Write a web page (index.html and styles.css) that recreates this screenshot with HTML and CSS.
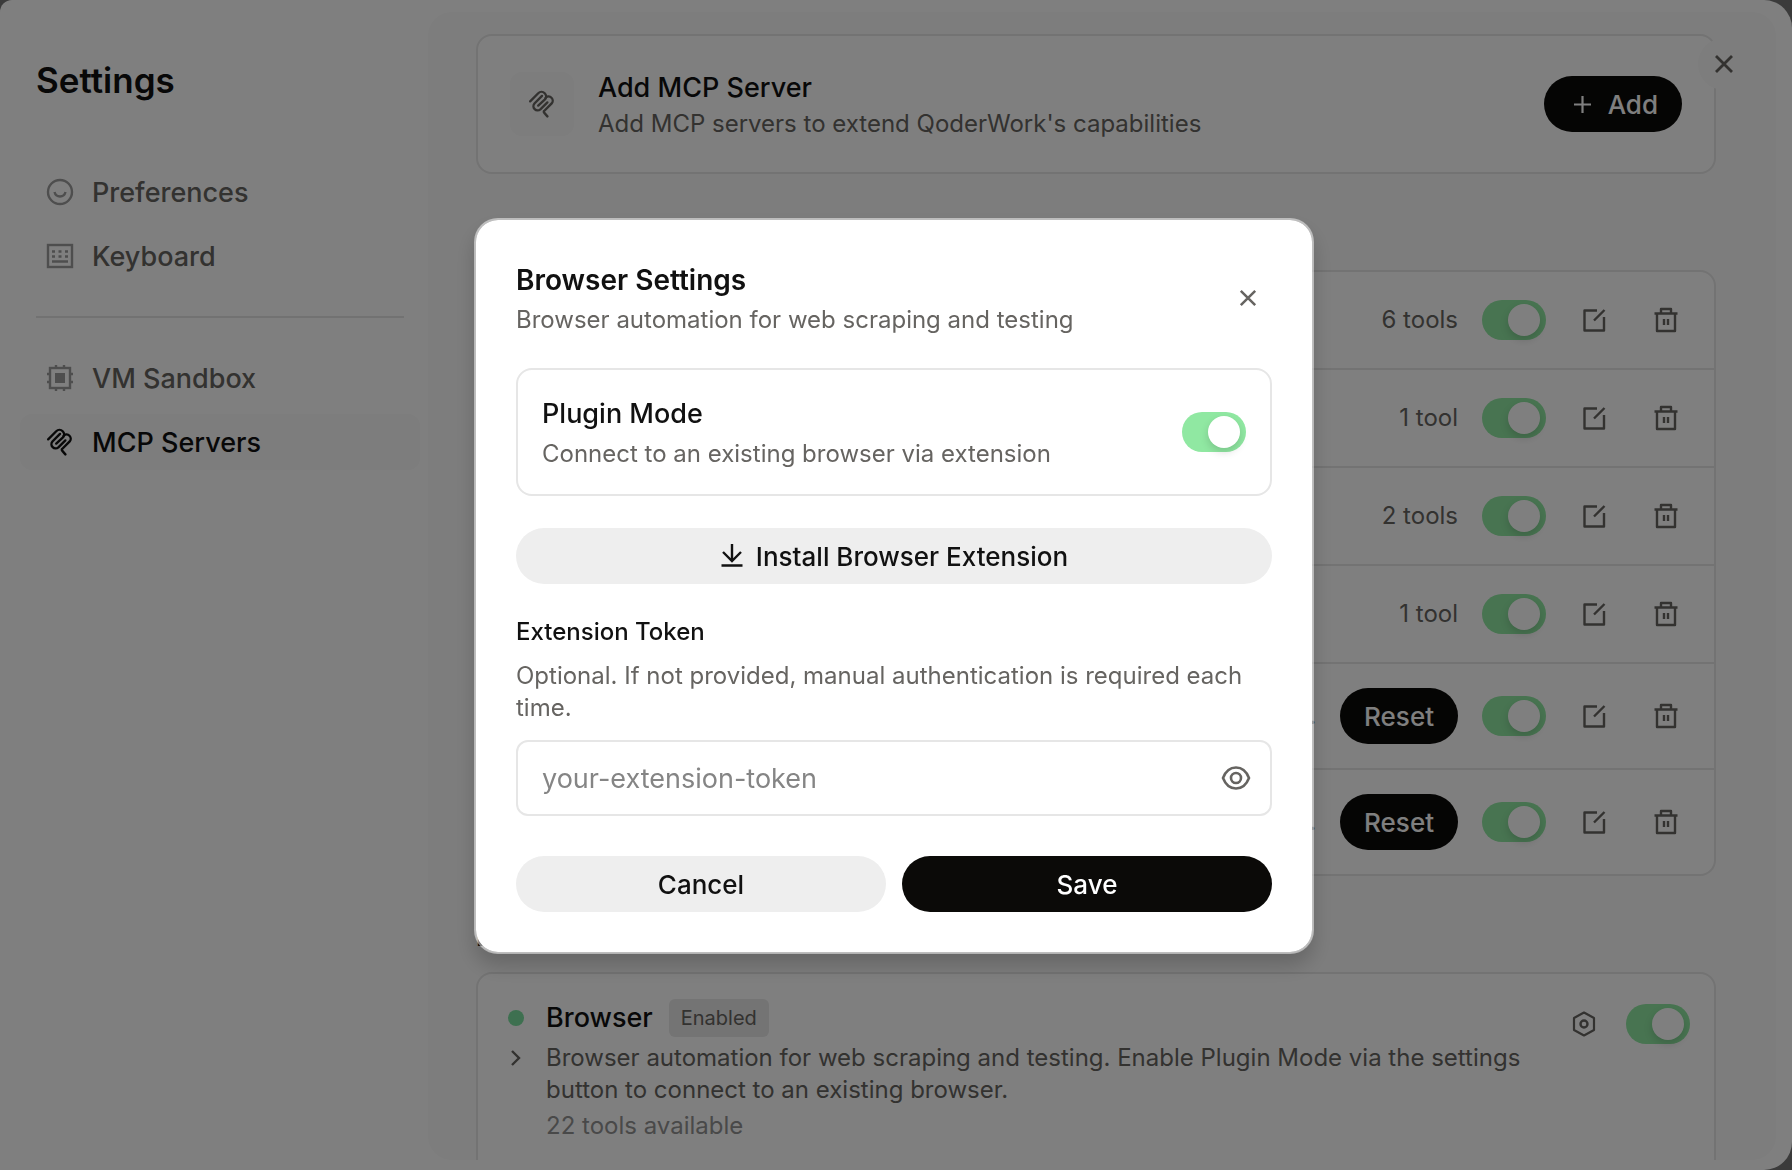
FILE: index.html
```html
<!DOCTYPE html>
<html lang="en">

<head>
    <meta charset="utf-8">
    <meta name="viewport" content="width=device-width, initial-scale=1" />
    <title>Settings</title>
    <link rel="stylesheet" href="styles.css">
</head>

<body>
    <!-- shared icons -->
    <svg class="sprite" aria-hidden="true">
        <symbol id="i-mcp" viewBox="0 0 26 26">
            <g fill="none" stroke="currentColor" stroke-width="2.200" stroke-linecap="round">
                <path d="M2 10.500L9.500 3a4.100 4.100 0 0 1 6 6L9.500 14.500" />
                <path d="M13 5.500L6 12.500a3.900 3.900 0 0 0 5.500 5.500L18 11.500" />
                <path d="M16.500 7a3.900 3.900 0 0 1 5.500 5.500L15 19.500a1 1 0 0 0 0 1.500L18 24.500" />
            </g>
        </symbol>
        <symbol id="i-close" viewBox="0 0 20 20">
            <path d="M2 2l16 16M18 2L2 18" fill="none" stroke="currentColor" stroke-width="2.8" />
        </symbol>
        <symbol id="i-edit" viewBox="0 0 24 24">
            <path d="M15 2.500H2.500V22.500H22V9M12 12.500L22.500 2" fill="none" stroke="currentColor" stroke-width="2.400" stroke-linejoin="round" />
        </symbol>
        <symbol id="i-trash" viewBox="0 0 24 26">
            <path d="M.5 6.500H23.500M7 6V2H17V6M3 6.500V24H21V6.500M10 12V18M14 12V18" fill="none" stroke="currentColor" stroke-width="2.400" stroke-linejoin="round" />
        </symbol>
    </svg>

    <div class="app">
        <aside class="sidebar">
            <h1>Settings</h1>
            <nav>
                <a class="nav-item" href="#preferences">
                    <svg width="28" height="28" viewBox="0 0 28 28" fill="none" stroke="currentColor" stroke-width="2.400">
                        <circle cx="14" cy="14" r="12" />
                        <path d="M8.500 14c1.500 6 9.500 6 11 0" />
                    </svg>
                    Preferences
                </a>
                <a class="nav-item" href="#keyboard">
                    <svg width="28" height="28" viewBox="0 0 28 28" fill="none" stroke="currentColor" stroke-width="2.400">
                        <rect x="2" y="3" width="24" height="22" />
                        <path d="M6 9.500h3M12.500 9.500h3M19 9.500h3M6 14.500h3M12.500 14.500h3M19 14.500h3M6 19.500h16" stroke-width="2.500" />
                    </svg>
                    Keyboard
                </a>
                <hr>
                <a class="nav-item" href="#sandbox">
                    <svg width="28" height="28" viewBox="0 0 28 28" fill="none" stroke="currentColor" stroke-width="2.400">
                        <rect x="4" y="4" width="20" height="20" />
                        <path d="M10 1v3M18 1v3M10 24v3M18 24v3M1 10h3M1 18h3M24 10h3M24 18h3" />
                        <rect x="9" y="9" width="10" height="10" fill="currentColor" stroke="none" />
                    </svg>
                    VM Sandbox
                </a>
                <a class="nav-item active" href="#mcp">
                    <svg width="28" height="28"><use href="#i-mcp" /></svg>
                    MCP Servers
                </a>
            </nav>
        </aside>

        <main class="panel">
            <section class="card add-card">
                <div class="tile"><svg width="28" height="28"><use href="#i-mcp" /></svg></div>
                <div class="grow">
                    <h3>Add MCP Server</h3>
                    <p class="text">Add MCP servers to extend QoderWork's capabilities</p>
                </div>
                <button class="btn dark" type="button">
                    <svg width="28" height="28" viewBox="0 0 28 28"><path d="M14.500 6v17M6 14.500h17" stroke="currentColor" stroke-width="2.200" /></svg>
                    Add
                </button>
            </section>

            <section class="card servers">
                <div class="server">
                    <span class="text">6 tools</span>
                    <input class="toggle" type="checkbox" aria-label="Enable server" checked>
                    <button class="icon-btn" type="button" aria-label="Edit"><svg width="24" height="24"><use href="#i-edit" /></svg></button>
                    <button class="icon-btn" type="button" aria-label="Delete"><svg width="24" height="26"><use href="#i-trash" /></svg></button>
                </div>
                <div class="server">
                    <span class="text">1 tool</span>
                    <input class="toggle" type="checkbox" aria-label="Enable server" checked>
                    <button class="icon-btn" type="button" aria-label="Edit"><svg width="24" height="24"><use href="#i-edit" /></svg></button>
                    <button class="icon-btn" type="button" aria-label="Delete"><svg width="24" height="26"><use href="#i-trash" /></svg></button>
                </div>
                <div class="server">
                    <span class="text">2 tools</span>
                    <input class="toggle" type="checkbox" aria-label="Enable server" checked>
                    <button class="icon-btn" type="button" aria-label="Edit"><svg width="24" height="24"><use href="#i-edit" /></svg></button>
                    <button class="icon-btn" type="button" aria-label="Delete"><svg width="24" height="26"><use href="#i-trash" /></svg></button>
                </div>
                <div class="server">
                    <span class="text">1 tool</span>
                    <input class="toggle" type="checkbox" aria-label="Enable server" checked>
                    <button class="icon-btn" type="button" aria-label="Edit"><svg width="24" height="24"><use href="#i-edit" /></svg></button>
                    <button class="icon-btn" type="button" aria-label="Delete"><svg width="24" height="26"><use href="#i-trash" /></svg></button>
                </div>
                <div class="server">
                    <span class="text">...</span>
                    <button class="btn dark" type="button">Reset</button>
                    <input class="toggle" type="checkbox" aria-label="Enable server" checked>
                    <button class="icon-btn" type="button" aria-label="Edit"><svg width="24" height="24"><use href="#i-edit" /></svg></button>
                    <button class="icon-btn" type="button" aria-label="Delete"><svg width="24" height="26"><use href="#i-trash" /></svg></button>
                </div>
                <div class="server">
                    <span class="text">...</span>
                    <button class="btn dark" type="button">Reset</button>
                    <input class="toggle" type="checkbox" aria-label="Enable server" checked>
                    <button class="icon-btn" type="button" aria-label="Edit"><svg width="24" height="24"><use href="#i-edit" /></svg></button>
                    <button class="icon-btn" type="button" aria-label="Delete"><svg width="24" height="26"><use href="#i-trash" /></svg></button>
                </div>
            </section>

            <h2 class="section-title">Built-in</h2>
            <section class="card builtin">
                <div class="marks">
                    <i class="dot"></i>
                    <button class="expand" type="button" aria-label="Expand">
                        <svg width="12" height="16" viewBox="0 0 12 16"><path d="M2 1l7 7-7 7" fill="none" stroke="currentColor" stroke-width="2.400" /></svg>
                    </button>
                </div>
                <div class="grow">
                    <div class="name"><h3>Browser</h3><span class="badge">Enabled</span></div>
                    <p class="text">Browser automation for web scraping and testing. Enable Plugin Mode via the settings button to connect to an existing browser.</p>
                    <p class="text light">22 tools available</p>
                </div>
                <div class="actions">
                    <button class="icon-btn" type="button" aria-label="Browser settings">
                        <svg width="24" height="26" viewBox="0 0 24 26" fill="none" stroke="currentColor" stroke-width="2.200">
                            <path d="M12 1.500l10 5.500v12l-10 5.500L2 19V7z" stroke-linejoin="round" />
                            <circle cx="12" cy="13" r="3.500" stroke-width="2.400" />
                        </svg>
                    </button>
                    <input class="toggle" type="checkbox" aria-label="Enable Browser" checked>
                </div>
            </section>
        </main>

        <button class="close-settings" type="button" aria-label="Close settings"><svg width="20" height="20"><use href="#i-close" /></svg></button>
    </div>

    <div class="overlay">
        <form class="modal" role="dialog" aria-labelledby="modal-title">
            <header>
                <div class="grow">
                    <h2 id="modal-title">Browser Settings</h2>
                    <p class="text">Browser automation for web scraping and testing</p>
                </div>
                <button class="icon-btn" type="button" aria-label="Close"><svg width="18" height="18"><use href="#i-close" /></svg></button>
            </header>
            <div class="option">
                <div class="grow">
                    <label class="option-title" for="plugin">Plugin Mode</label>
                    <p class="text">Connect to an existing browser via extension</p>
                </div>
                <input class="toggle" type="checkbox" id="plugin" checked>
            </div>
            <button class="btn install" type="button">
                <svg width="24" height="28" viewBox="0 0 24 28" fill="none" stroke="currentColor" stroke-width="2.400">
                    <path d="M12 2v17M3 10l9 9 9-9M1.500 23.500h21" />
                </svg>
                Install Browser Extension
            </button>
            <label class="field-label" for="token">Extension Token</label>
            <p class="text">Optional. If not provided, manual authentication is required each time.</p>
            <div class="field">
                <input type="text" id="token" placeholder="your-extension-token">
                <button class="icon-btn" type="button" aria-label="Show token">
                    <svg width="30" height="26" viewBox="0 0 30 26" fill="none" stroke="currentColor" stroke-width="2.600">
                        <path d="M15 2.500C8.500 2.500 4.500 6.500 2 13c2.500 6.500 6.500 10.500 13 10.500S25.500 19.500 28 13C25.500 6.500 21.500 2.500 15 2.500z" />
                        <circle cx="15" cy="13" r="5" />
                    </svg>
                </button>
            </div>
            <footer>
                <button class="btn" type="button">Cancel</button>
                <button class="btn dark" type="submit">Save</button>
            </footer>
        </form>
    </div>
</body>

</html>
```
FILE: styles.css
```css
* {
    box-sizing: border-box;
}

html {
    background: #777;
}

body {
    margin: 0;
    color: #111;
    font-family: Inter, "Liberation Sans", sans-serif;
    font-size: 26px;
}

h1, h2, h3, p {
    margin: 0;
}

h2 {
    font-size: 28px;
    line-height: 40px;
    font-weight: 600;
}

h3 {
    font-size: 27px;
    line-height: 40px;
    font-weight: 500;
}

button, input {
    margin: 0;
    font: inherit;
    color: inherit;
}

button {
    border: 0;
    padding: 0;
    cursor: pointer;
}

svg {
    flex: none;
    display: block;
}

.sprite {
    position: absolute;
    width: 0;
    height: 0;
}

.text {
    font-size: 24px;
    line-height: 32px;
    color: #666461;
}

.light {
    color: #929292;
}

.grow {
    flex: 1;
    min-width: 0;
}

.app {
    position: relative;
    display: flex;
    height: 100vh;
    padding: 12px 16px 10px 0;
    background: #fff;
    border-radius: 12px 28px 28px 0;
    overflow: hidden;
}

/* sidebar */
.sidebar {
    flex: none;
    width: 428px;
    padding: 44px 8px 0 20px;
}

.sidebar h1 {
    padding-left: 16px;
    margin-bottom: 60px;
    font-size: 35px;
    line-height: 48px;
    font-weight: 600;
}

.sidebar nav {
    display: flex;
    flex-direction: column;
    gap: 8px;
}

.nav-item {
    display: flex;
    align-items: center;
    gap: 18px;
    height: 56px;
    padding-left: 26px;
    border-radius: 12px;
    font-size: 27px;
    font-weight: 500;
    color: #666461;
    text-decoration: none;
}

.nav-item svg {
    color: #9c9c9c;
}

.nav-item.active, .nav-item.active svg {
    color: #111;
}

.nav-item.active {
    background: #fafafa;
}

.sidebar hr {
    width: 368px;
    margin: 24px 16px;
    border: 0;
    border-top: 2px solid #e4e4e4;
}

/* content */
.panel {
    flex: 1;
    min-width: 0;
    padding: 22px 60px 0 48px;
    background: #fafafa;
    border-radius: 24px;
    overflow: hidden;
}

.card {
    background: #fff;
    border: 2px solid #e6e6e6;
    border-radius: 16px;
}

.add-card {
    display: flex;
    align-items: center;
    gap: 24px;
    height: 140px;
    padding: 0 32px;
}

.tile {
    display: flex;
    align-items: center;
    justify-content: center;
    width: 64px;
    height: 64px;
    border-radius: 12px;
    background: #fafafa;
    color: #666461;
}

.servers {
    margin: 96px 0 40px;
}

.section-title {
    margin-bottom: 16px;
}

.server {
    display: flex;
    align-items: center;
    justify-content: flex-end;
    gap: 24px;
    padding: 24px;
}

.server + .server {
    border-top: 2px solid #e6e6e6;
}

.builtin {
    display: flex;
    align-items: flex-start;
    gap: 16px;
    height: 240px;
    padding: 24px;
}

.marks {
    display: flex;
    flex-direction: column;
    align-items: center;
    gap: 24px;
    width: 28px;
    padding-top: 12px;
}

.dot {
    width: 16px;
    height: 16px;
    border-radius: 50%;
    background: #7ce0a0;
}

.expand {
    background: none;
    color: #666461;
}

.name {
    display: flex;
    align-items: center;
    gap: 16px;
    margin-bottom: 4px;
}

.badge {
    padding: 3px 12px;
    border-radius: 6px;
    background: #e8e8e8;
    color: #666461;
    font-size: 20px;
    line-height: 32px;
}

.text + .text {
    margin-top: 4px;
}

.actions {
    display: flex;
    align-items: center;
    gap: 18px;
    padding-top: 2px;
}

.close-settings {
    position: absolute;
    top: 38px;
    right: 42px;
    display: grid;
    place-items: center;
    width: 52px;
    height: 52px;
    border-radius: 50%;
    background: #fafafa;
    color: #666461;
}

/* controls */
.btn {
    display: flex;
    align-items: center;
    justify-content: center;
    gap: 12px;
    height: 56px;
    padding: 0 24px;
    border-radius: 28px;
    background: #eee;
    font-weight: 500;
}

.btn.dark {
    background: #0b0a08;
    color: #fff;
}

.icon-btn {
    display: grid;
    place-items: center;
    width: 48px;
    height: 48px;
    background: none;
    color: #666461;
}

.toggle {
    appearance: none;
    flex: none;
    display: flex;
    align-items: center;
    width: 64px;
    height: 40px;
    padding: 4px 6px;
    border-radius: 20px;
    background: #ddd;
    cursor: pointer;
}

.toggle::before {
    content: "";
    width: 32px;
    height: 32px;
    border-radius: 50%;
    background: #fff;
    box-shadow: 0 4px 8px rgba(0, 0, 0, .15);
}

.toggle:checked {
    justify-content: flex-end;
    background: #90e8a2;
}

/* modal */
.overlay {
    position: fixed;
    inset: 0;
    display: flex;
    align-items: center;
    justify-content: center;
    padding: 2px 4px 0 0;
    background: rgba(0, 0, 0, .5);
}

.modal {
    width: 840px;
    max-width: 100%;
    padding: 40px;
    border: 2px solid rgba(255, 255, 255, .5);
    border-radius: 24px;
    background: #fff;
    background-clip: padding-box;
    box-shadow: 0 12px 20px rgba(0, 0, 0, .18);
}

.modal header, .option {
    display: flex;
    align-items: center;
}

.modal header h2 {
    margin-bottom: 4px;
}

.option {
    margin: 32px 0;
    padding: 24px;
    border: 2px solid #e6e6e6;
    border-radius: 16px;
}

.option-title {
    display: block;
    margin-bottom: 4px;
    font-size: 27px;
    line-height: 40px;
    font-weight: 500;
}

.install {
    width: 100%;
    margin-bottom: 32px;
}

.field-label {
    display: block;
    margin-bottom: 12px;
    font-size: 24px;
    line-height: 32px;
    font-weight: 500;
}

.field {
    display: flex;
    align-items: center;
    height: 76px;
    margin: 16px 0 40px;
    padding: 0 10px 0 24px;
    border: 2px solid #e6e6e6;
    border-radius: 12px;
}

.field input {
    flex: 1;
    min-width: 0;
    padding: 0;
    border: 0;
    outline: 0;
    background: none;
    font-size: 27px;
}

.field input::placeholder {
    color: #858585;
}

.modal footer {
    display: grid;
    grid-template-columns: 1fr 1fr;
    gap: 16px;
}
```
